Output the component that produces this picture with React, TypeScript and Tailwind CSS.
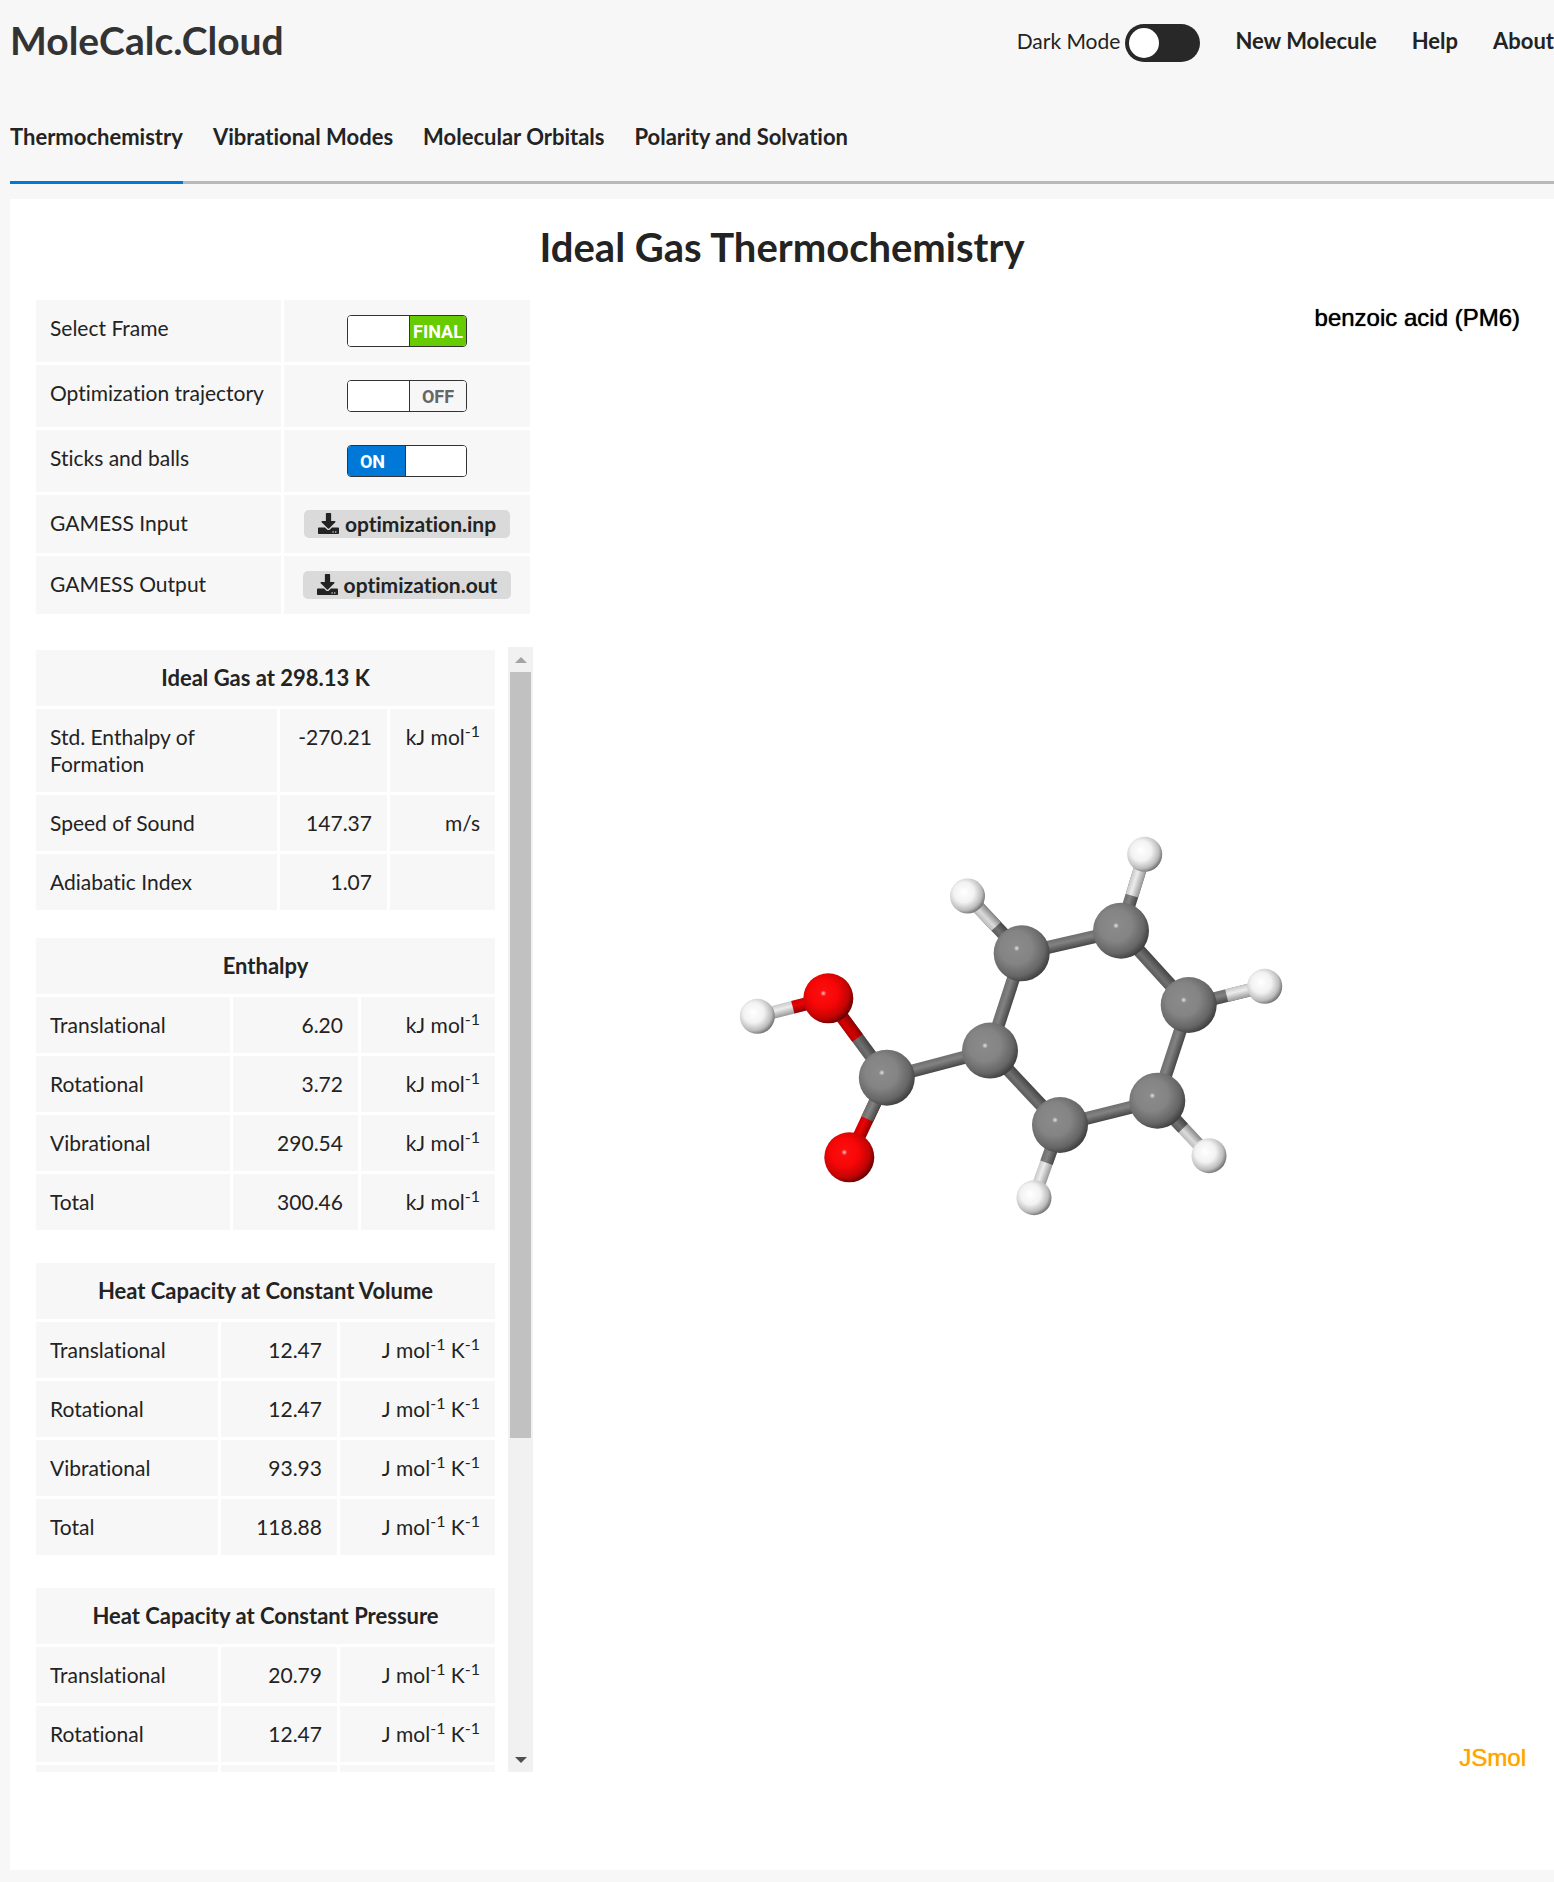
import { useRef, useState } from "react";
import type { ReactNode } from "react";
import { FaDownload } from "react-icons/fa";

type Kind = "C" | "O" | "H";
type Atom = { id: string; kind: Kind; x: number; y: number };

const radius: Record<Kind, number> = { C: 28, O: 25, H: 17.5 };

const atoms: Atom[] = [
  { id: "H1", kind: "H", x: 967.5, y: 896 },
  { id: "H2", kind: "H", x: 757.3, y: 1016.3 },
  { id: "H3", kind: "H", x: 1144.7, y: 854.3 },
  { id: "H4", kind: "H", x: 1264.7, y: 986.3 },
  { id: "H5", kind: "H", x: 1209, y: 1155.7 },
  { id: "H6", kind: "H", x: 1034, y: 1197.7 },
  { id: "O1", kind: "O", x: 828.3, y: 998.3 },
  { id: "O2", kind: "O", x: 849.3, y: 1157.3 },
  { id: "C1", kind: "C", x: 990, y: 1050.6 },
  { id: "C2", kind: "C", x: 1021.7, y: 953.3 },
  { id: "C3", kind: "C", x: 1121, y: 930.7 },
  { id: "C4", kind: "C", x: 1188.7, y: 1005 },
  { id: "C5", kind: "C", x: 1157.3, y: 1100.7 },
  { id: "C6", kind: "C", x: 1060, y: 1125 },
  { id: "C7", kind: "C", x: 886.8, y: 1077.7 },
];

const bonds: [string, string, number][] = [
  ["C1", "C2", 0.5],
  ["C2", "C3", 0.5],
  ["C3", "C4", 0.5],
  ["C4", "C5", 0.5],
  ["C5", "C6", 0.5],
  ["C6", "C1", 0.5],
  ["C7", "C1", 0.5],
  ["H1", "C2", 0.53],
  ["H2", "O1", 0.5],
  ["O1", "C7", 0.5],
  ["O2", "C7", 0.48],
  ["H3", "C3", 0.54],
  ["H4", "C4", 0.5],
  ["H5", "C5", 0.5],
  ["H6", "C6", 0.48],
];

const atomById = (id: string) => atoms.find((a) => a.id === id)!;

// Each half of a bond takes the colour of the atom it touches.
function Bond({ from, to, split }: { from: string; to: string; split: number }) {
  let a = atomById(from);
  let b = atomById(to);
  let s = split;
  // Point every bond so that its lit edge is the upper left one.
  if (b.y - a.y + (a.x - b.x) > 0) {
    [a, b] = [b, a];
    s = 1 - s;
  }
  const length = Math.hypot(b.x - a.x, b.y - a.y);
  const angle = (Math.atan2(b.y - a.y, b.x - a.x) * 180) / Math.PI;
  const steep = (b.x - a.x) * (b.y - a.y) > 0 ? "D" : "";
  return (
    <g transform={`translate(${a.x} ${a.y}) rotate(${angle})`}>
      <rect x={0} y={-6.5} width={length} height={13} fill={`url(#bond${a.kind}${steep})`} />
      {a.kind !== b.kind && (
        <rect x={length * s} y={-6.5} width={length * (1 - s)} height={13} fill={`url(#bond${b.kind}${steep})`} />
      )}
    </g>
  );
}

const bondShades: [string, string, string, string][] = [
  ["bondC", "#6e6e6e", "#828282", "#464646"],
  ["bondO", "#d00000", "#e80404", "#8c0000"],
  ["bondH", "#c8c8c8", "#ececec", "#989898"],
  ["bondCD", "#5c5c5c", "#707070", "#444444"],
  ["bondOD", "#b80000", "#d40000", "#8c0000"],
  ["bondHD", "#bcbcbc", "#dadada", "#868686"],
];

const atomShades: [string, string, string, string, string][] = [
  ["C", "#8b8b8b", "#848484", "#666666", "#383838"],
  ["O", "#ff1010", "#f60606", "#c00404", "#580000"],
  ["H", "#ffffff", "#f2f2f2", "#bcbcbc", "#646464"],
];

function Molecule() {
  return (
    <svg viewBox="736 832 589 388" className="mb-6 w-full max-w-[589px]" role="img" aria-label="Ball and stick model of benzoic acid">
      <defs>
        {bondShades.map(([id, edge, mid, dark]) => (
          <linearGradient key={id} id={id} x1="0" y1="0" x2="0" y2="1">
            <stop offset="0" stopColor={edge} />
            <stop offset="0.4" stopColor={mid} />
            <stop offset="1" stopColor={dark} />
          </linearGradient>
        ))}
        {atomShades.map(([id, c0, c1, c2, c3]) => (
          <radialGradient key={id} id={`atom${id}`} cx="0.4" cy="0.4" r="0.65">
            <stop offset="0" stopColor={c0} />
            <stop offset="0.45" stopColor={c1} />
            <stop offset="0.78" stopColor={c2} />
            <stop offset="1" stopColor={c3} />
          </radialGradient>
        ))}
        <radialGradient id="glint">
          <stop offset="0" stopColor="#fff" stopOpacity="0.75" />
          <stop offset="1" stopColor="#fff" stopOpacity="0" />
        </radialGradient>
      </defs>
      {bonds.map(([from, to, split]) => (
        <Bond key={from + to} from={from} to={to} split={split} />
      ))}
      {atoms.map((a) => (
        <g key={a.id}>
          <circle cx={a.x} cy={a.y} r={radius[a.kind]} fill={`url(#atom${a.kind})`} />
          <circle cx={a.x - 5} cy={a.y - 5} r={3} fill="url(#glint)" />
        </g>
      ))}
    </svg>
  );
}

type SwitchProps = { label: string; initial: boolean; onText: string; offText: string; offClass: string };

function Switch({ label, initial, onText, offText, offClass }: SwitchProps) {
  const [on, setOn] = useState(initial);
  return (
    <label className="flex h-8 w-[120px] cursor-pointer overflow-hidden rounded border border-[#333] bg-white font-['Roboto',sans-serif] text-[18px] font-bold">
      <input type="checkbox" className="sr-only" aria-label={label} checked={on} onChange={() => setOn(!on)} />
      {on ? (
        <>
          <span className="flex w-[58px] items-center justify-center border-r border-[#333] bg-[#0078d7] pr-2 text-white">{onText}</span>
          <span className="flex-1 bg-white" />
        </>
      ) : (
        <>
          <span className="flex-1 bg-white" />
          <span className={`flex w-[57px] items-center justify-center border-l border-[#333] ${offClass}`}>{offText}</span>
        </>
      )}
    </label>
  );
}

function FileButton({ name }: { name: string }) {
  return (
    <button type="button" className="flex h-7 items-center gap-[6px] rounded-[5px] bg-[#dadada] px-[14px] pb-[2px] font-bold">
      <FaDownload className="size-[21px]" />
      {name}
    </button>
  );
}

function SettingRow({ label, tall, children }: { label: string; tall?: boolean; children: ReactNode }) {
  return (
    <tr className={tall ? "h-[62px]" : "h-[58px]"}>
      <th scope="row" className="bg-[#f7f7f7] pt-[14px] pl-[14px] text-left align-top font-normal whitespace-nowrap">
        {label}
      </th>
      <td className="bg-[#f7f7f7]">
        <div className="flex justify-center">{children}</div>
      </td>
    </tr>
  );
}

const Sup = () => <sup className="top-[-8px] text-[16px]">-1</sup>;
const kJ = (
  <>
    kJ mol
    <Sup />
  </>
);
const JK = (
  <>
    J mol
    <Sup /> K<Sup />
  </>
);

type DataTableProps = { title: string; rows: [string, string, ReactNode][]; cols: [string, string] };

function DataTable({ title, rows, cols }: DataTableProps) {
  return (
    <table className="w-full table-fixed border-separate border-spacing-[3px]">
      <colgroup>
        <col />
        <col className={cols[0]} />
        <col className={cols[1]} />
      </colgroup>
      <thead>
        <tr className="h-14">
          <th colSpan={3} className="bg-[#f7f7f7] pt-[14px] text-center align-top text-[22px] font-bold">
            {title}
          </th>
        </tr>
      </thead>
      <tbody>
        {rows.map(([name, value, unit]) => (
          <tr key={name} className="h-14">
            <th scope="row" className="bg-[#f7f7f7] pt-[14px] pr-[15px] pb-[15px] pl-[14px] text-left align-top font-normal">
              {name}
            </th>
            <td className="bg-[#f7f7f7] pt-[14px] pr-[15px] text-right align-top">{value}</td>
            <td className="bg-[#f7f7f7] pt-[14px] pr-[15px] text-right align-top whitespace-nowrap">{unit}</td>
          </tr>
        ))}
      </tbody>
    </table>
  );
}

const tabs = ["Thermochemistry", "Vibrational Modes", "Molecular Orbitals", "Polarity and Solvation"];

export default function App() {
  const scroller = useRef<HTMLDivElement>(null);
  const [dark, setDark] = useState(false);
  return (
    <div className="min-h-screen bg-[#f7f7f7] pb-3 pl-[10px] font-['Lato','Open_Sans',sans-serif] text-[21px] leading-[27px] text-[#232323] [font-variant-ligatures:none]">
      <header className="flex h-20 items-center justify-between">
        <a href="#home" className="text-[39px] leading-[48px] font-bold text-[#333]">
          MoleCalc.Cloud
        </a>
        <nav className="flex items-center gap-[35px] text-[22px] font-bold">
          <label className="flex cursor-pointer items-center gap-[5px] text-[21px] font-normal">
            Dark Mode
            <input type="checkbox" className="peer sr-only" checked={dark} onChange={() => setDark(!dark)} />
            <span className="mt-[6px] flex h-[38px] w-[75px] items-center rounded-full bg-[#282828] p-1 peer-checked:justify-end">
              <span className="size-[30px] rounded-full bg-white" />
            </span>
          </label>
          <a href="#new">New Molecule</a>
          <a href="#help">Help</a>
          <a href="#about">About</a>
        </nav>
      </header>

      <nav className="flex h-[104px] gap-[30px] border-b-[3px] border-[#b9b9b9] text-[22px] font-bold">
        {tabs.map((tab, i) => (
          <a
            key={tab}
            href={`#tab-${i}`}
            className={`-mb-[3px] flex items-center border-b-[3px] pt-3 ${i === 0 ? "border-[#0078d7]" : "border-transparent"}`}
          >
            {tab}
          </a>
        ))}
      </nav>

      <main className="mt-[15px] bg-white px-[23px] pt-6 pb-[98px]">
        <h1 className="mb-[26px] text-center text-[40px] leading-[48px] font-bold">Ideal Gas Thermochemistry</h1>
        <div className="flex">
          <div className="w-[500px] shrink-0">
            <table className="w-[500px] table-fixed border-separate border-spacing-[3px]">
              <colgroup>
                <col className="w-[245px]" />
                <col />
              </colgroup>
              <tbody>
                <SettingRow label="Select Frame" tall>
                  <Switch label="Select Frame" initial={false} onText="FIRST" offText="FINAL" offClass="bg-[#66cc00] text-white" />
                </SettingRow>
                <SettingRow label="Optimization trajectory" tall>
                  <Switch label="Optimization trajectory" initial={false} onText="ON" offText="OFF" offClass="bg-[#f7f7f7] text-[#666]" />
                </SettingRow>
                <SettingRow label="Sticks and balls" tall>
                  <Switch label="Sticks and balls" initial onText="ON" offText="OFF" offClass="bg-[#f7f7f7] text-[#666]" />
                </SettingRow>
                <SettingRow label="GAMESS Input">
                  <FileButton name="optimization.inp" />
                </SettingRow>
                <SettingRow label="GAMESS Output">
                  <FileButton name="optimization.out" />
                </SettingRow>
              </tbody>
            </table>

            <div className="mt-[30px] flex h-[1125px]">
              <div ref={scroller} className="w-[465px] overflow-y-auto [scrollbar-width:none]">
                <div className="flex flex-col gap-[27px]">
                  <div className="-mb-[5px]">
                    <DataTable
                      title="Ideal Gas at 298.13 K"
                      cols={["w-[107px]", "w-[105px]"]}
                      rows={[
                        ["Std. Enthalpy of Formation", "-270.21", kJ],
                        ["Speed of Sound", "147.37", "m/s"],
                        ["Adiabatic Index", "1.07", ""],
                      ]}
                    />
                  </div>
                  <DataTable
                    title="Enthalpy"
                    cols={["w-[125px]", "w-[134px]"]}
                    rows={[
                      ["Translational", "6.20", kJ],
                      ["Rotational", "3.72", kJ],
                      ["Vibrational", "290.54", kJ],
                      ["Total", "300.46", kJ],
                    ]}
                  />
                  <DataTable
                    title="Heat Capacity at Constant Volume"
                    cols={["w-[116px]", "w-[155px]"]}
                    rows={[
                      ["Translational", "12.47", JK],
                      ["Rotational", "12.47", JK],
                      ["Vibrational", "93.93", JK],
                      ["Total", "118.88", JK],
                    ]}
                  />
                  <DataTable
                    title="Heat Capacity at Constant Pressure"
                    cols={["w-[116px]", "w-[155px]"]}
                    rows={[
                      ["Translational", "20.79", JK],
                      ["Rotational", "12.47", JK],
                      ["Vibrational", "93.93", JK],
                    ]}
                  />
                </div>
              </div>
              <div className="ml-[10px] flex w-[25px] flex-col bg-[#f1f1f1]">
                <button
                  type="button"
                  aria-label="Scroll up"
                  className="flex h-[25px] shrink-0 items-center justify-center"
                  onClick={() => scroller.current?.scrollBy(0, -60)}
                >
                  <svg width="12" height="6" viewBox="0 0 12 6">
                    <path d="M6 0L12 6H0Z" fill="#a3a3a3" />
                  </svg>
                </button>
                <div className="flex-1">
                  <div className="mx-[2px] h-[766px] bg-[#c1c1c1]" />
                </div>
                <button
                  type="button"
                  aria-label="Scroll down"
                  className="flex h-[25px] shrink-0 items-center justify-center"
                  onClick={() => scroller.current?.scrollBy(0, 60)}
                >
                  <svg width="12" height="6" viewBox="0 0 12 6">
                    <path d="M6 6L12 0H0Z" fill="#505050" />
                  </svg>
                </button>
              </div>
            </div>
          </div>

          <div className="flex flex-1 flex-col items-center justify-between pr-[3px] font-['Liberation_Sans',sans-serif] text-[24px] leading-7 [text-shadow:0_0_1px_currentColor]">
            <p className="self-end pt-[7px] pr-2 text-black">benzoic acid (PM6)</p>
            <Molecule />
            <p className="self-end pr-[2px] text-[#ffa500]">JSmol</p>
          </div>
        </div>
      </main>
    </div>
  );
}
